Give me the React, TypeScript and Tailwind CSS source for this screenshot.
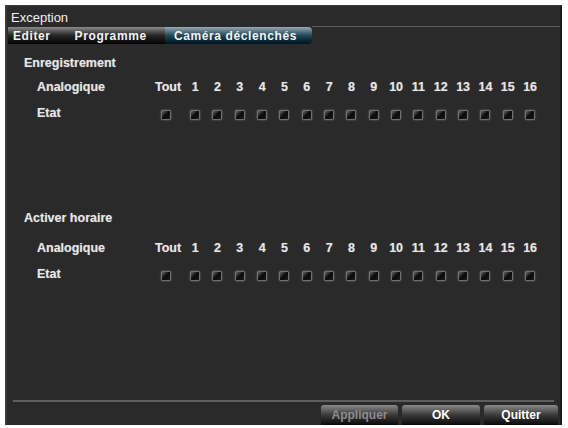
import React from 'react';

const CHANNELS = Array.from({ length: 16 }, (_, i) => i + 1);

function Box() {
  return (
    <div className="w-[10px] h-[10px] border border-[#707070] rounded-[1px] bg-gradient-to-br from-[#6a6a6a] via-[#0a0a0a] to-[#1c1c1c] shadow-[0_0_2px_rgba(170,170,170,0.6)]" />
  );
}

function Section({ title, rowGap, etatGap }: { title: string; rowGap: string; etatGap: string }) {
  return (
    <div className="text-[12.5px] font-bold text-[#e6e6e6] [text-shadow:0_0_1px_rgba(255,255,255,0.4)]">
      <div className="pl-[17px] h-[20px] flex items-center">{title}</div>
      <div className={'flex items-center h-[20px] ' + rowGap}>
        <div className="pl-[30px] w-[145px]">Analogique</div>
        <div className="w-[32px] text-center">Tout</div>
        {CHANNELS.map((n) => (
          <div key={n} className="w-[22.33px] text-center">
            {n}
          </div>
        ))}
      </div>
      <div className={'flex items-center h-[20px] ' + etatGap}>
        <div className="pl-[30px] w-[145px] -mt-[3px]">Etat</div>
        <div className="w-[28px] flex justify-center">
          <Box />
        </div>
        <div className="w-[4px]" />
        {CHANNELS.map((n) => (
          <div key={n} className="w-[22.33px] flex justify-center">
            <Box />
          </div>
        ))}
      </div>
    </div>
  );
}

function Btn({ label, disabled }: { label: string; disabled?: boolean }) {
  return (
    <div
      className={
        'h-[20px] flex items-center justify-center rounded-t-[3px] bg-gradient-to-b from-[#8a8a8a] via-[#3a3a3a] to-[#0c0c0c] text-[12px] font-bold ' +
        (disabled ? 'text-[#8c8c8c]' : 'text-white')
      }
    >
      {label}
    </div>
  );
}

export default function App() {
  return (
    <div className="w-[568px] h-[428px] bg-white pt-[5px] pl-[5px] pr-[6px] pb-[3px]" style={{ fontFamily: '"Liberation Sans", Arial, sans-serif' }}>
      <div className="h-full flex flex-col bg-[#2a2a2a] border-l-2 border-t border-r-2 border-[#3c3c3c] border-r-[#1a1a1a]">
        <div className="h-[21px] pl-[4px] flex items-end text-[13px] text-[#f0f0f0]">Exception</div>
        <div className="flex items-stretch h-[17px] pl-[1px]">
          <div className="w-[157px] flex items-center bg-gradient-to-b from-[#8c8c8c] via-[#262626] to-[#050505] text-[12px] font-bold tracking-[0.6px] text-[#f2f2f2]">
            <span className="pl-[5px]">Editer</span>
            <span className="pl-[24px]">Programme</span>
          </div>
          <div className="w-[147px] flex items-center rounded-r-[4px] bg-gradient-to-b from-[#9aa8b4] via-[#1f4a5a] to-[#03121a] text-[12px] font-bold tracking-[0.6px] text-[#f2f2f2] pl-[9px]">
            Caméra déclenchés
          </div>
          <div className="flex-1 border-t border-[#5a5a5a] mt-[-1px]" />
        </div>
        <div className="pt-[9px]">
          <Section title="Enregistrement" rowGap="mt-[4px]" etatGap="mt-[8px]" />
        </div>
        <div className="pt-[83px]">
          <Section title="Activer horaire" rowGap="mt-[10px]" etatGap="mt-[8px]" />
        </div>
        <div className="flex-1" />
        <div className="mx-[6px] border-t-2 border-[#5e5e5e]" />
        <div className="flex justify-end gap-[4px] pt-[3px] pr-[2px] h-[23px]">
          <div className="w-[77px]">
            <Btn label="Appliquer" disabled />
          </div>
          <div className="w-[78px]">
            <Btn label="OK" />
          </div>
          <div className="w-[74px]">
            <Btn label="Quitter" />
          </div>
        </div>
      </div>
    </div>
  );
}
